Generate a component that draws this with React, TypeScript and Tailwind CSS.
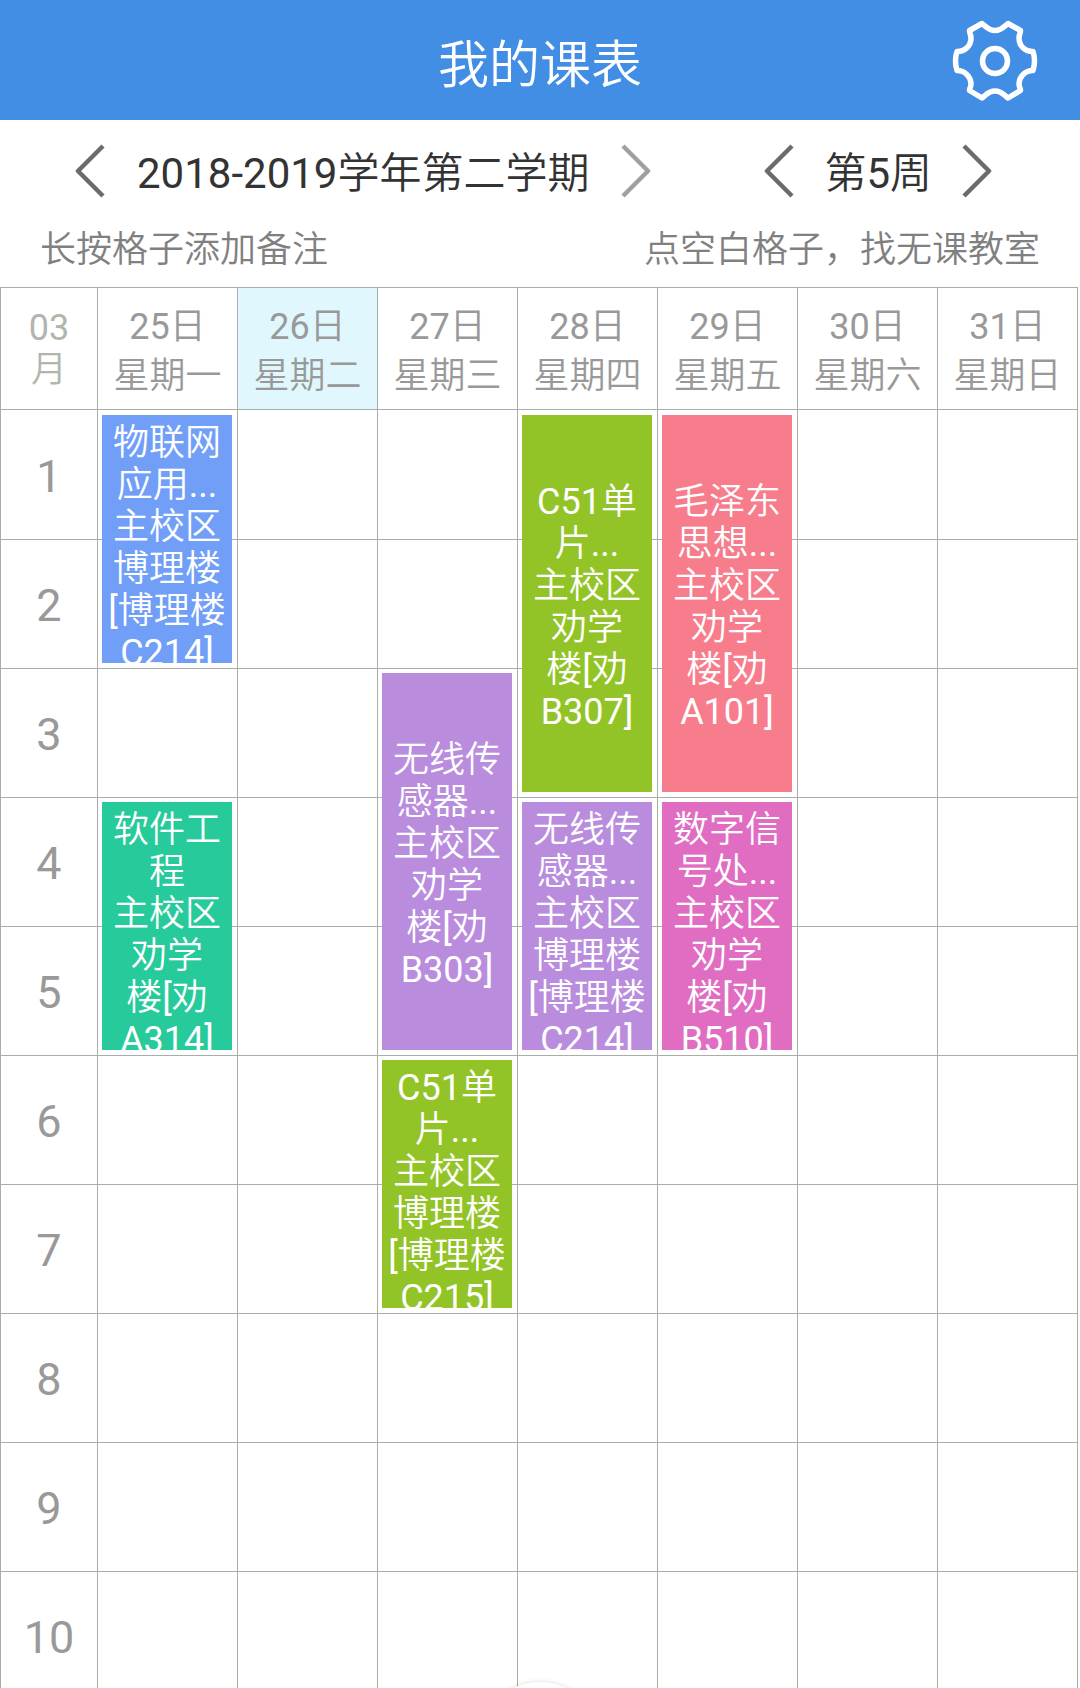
import React from "react";

type Course = { day: number; start: number; span: 2 | 3; color: string; text: string };

const days = [
  ["25日", "星期一"],
  ["26日", "星期二"],
  ["27日", "星期三"],
  ["28日", "星期四"],
  ["29日", "星期五"],
  ["30日", "星期六"],
  ["31日", "星期日"],
];

const today = 1;

const courses: Course[] = [
  { day: 0, start: 1, span: 2, color: "bg-[#719ff7]", text: "物联网\n应用...\n主校区\n博理楼\n[博理楼\nC214]" },
  { day: 3, start: 1, span: 3, color: "bg-[#92c427]", text: "C51单\n片...\n主校区\n劝学\n楼[劝\nB307]" },
  { day: 4, start: 1, span: 3, color: "bg-[#f77d8c]", text: "毛泽东\n思想...\n主校区\n劝学\n楼[劝\nA101]" },
  { day: 2, start: 3, span: 3, color: "bg-[#b98cde]", text: "无线传\n感器...\n主校区\n劝学\n楼[劝\nB303]" },
  { day: 0, start: 4, span: 2, color: "bg-[#27ca9b]", text: "软件工\n程\n主校区\n劝学\n楼[劝\nA314]" },
  { day: 3, start: 4, span: 2, color: "bg-[#b98cde]", text: "无线传\n感器...\n主校区\n博理楼\n[博理楼\nC214]" },
  { day: 4, start: 4, span: 2, color: "bg-[#e16dc3]", text: "数字信\n号处...\n主校区\n劝学\n楼[劝\nB510]" },
  { day: 2, start: 6, span: 2, color: "bg-[#92c427]", text: "C51单\n片...\n主校区\n博理楼\n[博理楼\nC215]" },
];

function Arrow({ dir, label, faded }: { dir: "left" | "right"; label: string; faded?: boolean }) {
  return (
    <button type="button" aria-label={label} className={faded ? "text-[#a0a0a0]" : "text-[#6b6b6b]"}>
      <svg width="30" height="56" viewBox="0 0 30 56" fill="none" stroke="currentColor" strokeWidth="4.5" strokeLinejoin="round">
        <path d={dir === "left" ? "M28 2 3 27 28 52" : "M2 2 27 27 2 52"} />
      </svg>
    </button>
  );
}

function CourseBlock({ course }: { course: Course }) {
  return (
    <button
      type="button"
      className={`absolute left-1 right-[5px] z-10 flex flex-col overflow-hidden pt-[7px] text-4xl leading-[42px] text-white ${
        course.start === 1 ? "top-[5px]" : "top-1"
      } ${course.span === 3 ? "h-[377px]" : "h-[248px]"} ${course.color}`}
    >
      <span className="my-auto w-full whitespace-pre text-center">{course.text}</span>
    </button>
  );
}

export default function App() {
  return (
    <div className="relative h-screen overflow-hidden bg-white font-['Roboto','Noto_Sans_CJK_SC_DemiLight','Noto_Sans_CJK_SC',sans-serif]">
      <header className="grid h-[120px] grid-cols-[1fr_auto_1fr] items-center bg-[#428ee4] text-white">
        <h1 className="col-start-2 pt-3 text-[51px] leading-[60px] font-[350]">我的课表</h1>
        <button type="button" aria-label="设置" className="mr-[30px] justify-self-end">
          <svg width="110" height="100" viewBox="0 0 110 100" fill="none" stroke="white" strokeWidth="5.5" strokeLinejoin="round">
            <path d="M42 13.5 29.5 20.5C29.5 23 31 25 31 28 31 36 25 41.5 17 41.5Q14 51 17 60.5C25 60.5 31 67 31 74 31 77 29.5 78 29.5 80.5L42 88C45 86 48 81 55 81S65 86 68 88L80.5 80.5C80.5 78 79 77 79 74 79 67 85 60.5 93 60.5Q96 51 93 41.5C85 41.5 79 36 79 28 79 25 80.5 23 80.5 20.5L68 13.5C65 15.5 62 20.5 55 20.5S45 15.5 42 13.5Z" />
            <circle cx="55" cy="51" r="12.5" />
          </svg>
        </button>
      </header>

      <div className="flex h-[103px] items-center justify-between pr-[88px] pl-[75px] text-[42px] text-[#333]">
        <div className="flex items-center gap-8">
          <Arrow dir="left" label="上一学期" />
          <span className="pt-1 leading-[50px]">2018-2019学年第二学期</span>
          <Arrow dir="right" label="下一学期" faded />
        </div>
        <div className="flex items-center gap-[30px]">
          <Arrow dir="left" label="上一周" />
          <span className="pt-1 leading-[50px]">第5周</span>
          <Arrow dir="right" label="下一周" />
        </div>
      </div>

      <div className="flex h-16 justify-between px-10 pt-0.5 text-4xl leading-[50px] font-[350] text-[#808080]">
        <p>长按格子添加备注</p>
        <p>点空白格子，找无课教室</p>
      </div>

      <div className="pr-0.5">
        <table className="w-full table-fixed border-separate border-spacing-0 border-t border-l border-[#aaaeaa] text-[#999]">
          <thead>
            <tr className="h-[122px]">
              <th scope="col" className="w-[97px] border-r border-b border-[#aaaeaa] p-0 text-4xl leading-[42px] font-normal text-[#b0b5ae]">
                03
                <br />月
              </th>
              {days.map(([date, name], i) => (
                <th
                  key={date}
                  scope="col"
                  className={`border-r border-b border-[#aaaeaa] p-0 pt-1.5 text-4xl leading-[49px] font-normal ${i === today ? "bg-[#e0f8fd]" : ""}`}
                >
                  {date}
                  <br />
                  {name}
                </th>
              ))}
            </tr>
          </thead>
          <tbody>
            {Array.from({ length: 10 }, (_, r) => r + 1).map((n) => (
              <tr key={n} className={n === 1 ? "h-[130px]" : "h-[129px]"}>
                <th scope="row" className="border-r border-b border-[#aaaeaa] p-0 pt-1 text-[45px] leading-[54px] font-normal">
                  {n}
                </th>
                {days.map(([date], d) => {
                  const course = courses.find((c) => c.day === d && c.start === n);
                  return (
                    <td key={date} className="relative border-r border-b border-[#aaaeaa] p-0">
                      {course && <CourseBlock course={course} />}
                    </td>
                  );
                })}
              </tr>
            ))}
          </tbody>
        </table>
      </div>

      <button
        type="button"
        aria-label="更多"
        className="absolute -bottom-[114px] left-1/2 z-20 size-30 -translate-x-1/2 rounded-full bg-white shadow-[0_0_5px_rgba(0,0,0,0.15)]"
      />
    </div>
  );
}
